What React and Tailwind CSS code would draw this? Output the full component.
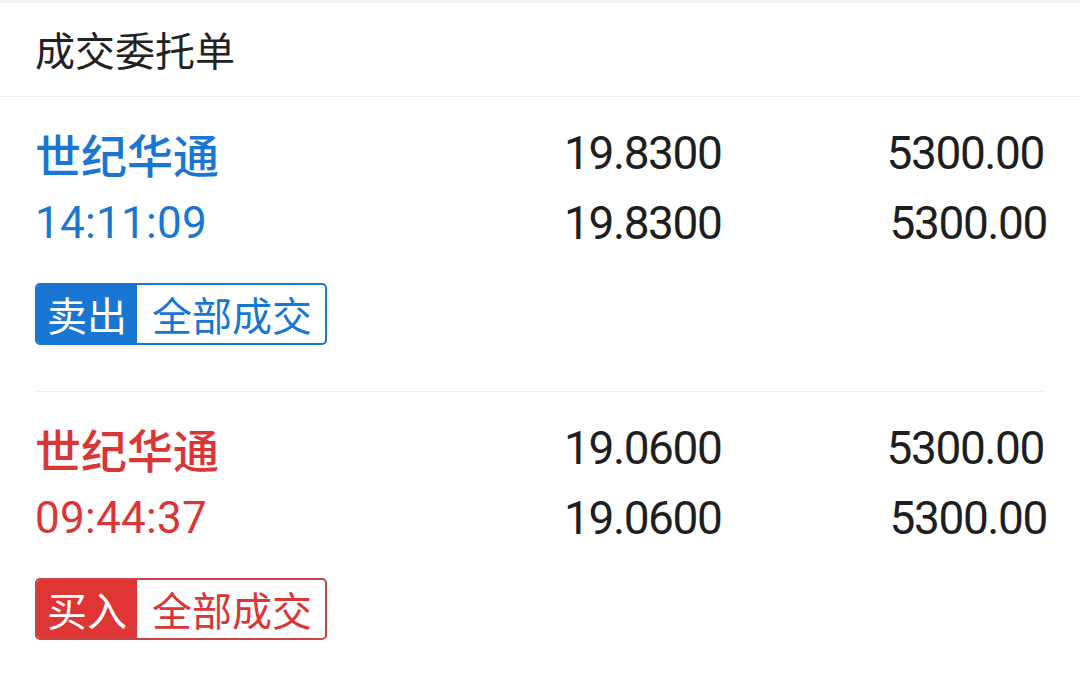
import React from "react";

const cjk = { fontFamily: '"Noto Sans CJK SC", "Noto Sans", sans-serif' };
const num = { fontFamily: 'Roboto, "Noto Sans CJK SC", sans-serif' };

function Item({ color, bg, border, name, time, side, price, qty, pt }) {
  return (
    <div className={`flex flex-col ${pt}`}>
      <div className="flex h-[70px] items-center">
        <div className={`w-[529px] text-[46px] font-medium leading-none ${color}`} style={cjk}>{name}</div>
        <div className="w-[160px] text-[46px] leading-none tracking-[-1.4px] text-[#1e1e1e]" style={num}>{price}</div>
        <div className="flex-1 pr-[1px] text-right text-[46px] leading-none tracking-[-1.4px] text-[#1e1e1e]" style={num}>{qty}</div>
      </div>
      <div className="flex h-[70px] items-center">
        <div className={`w-[529px] text-[44px] leading-none tracking-[0.3px] ${color}`} style={num}>{time}</div>
        <div className="w-[160px] text-[46px] leading-none tracking-[-1.4px] text-[#1e1e1e]" style={num}>{price}</div>
        <div className="-mr-[2px] flex-1 text-right text-[46px] leading-none tracking-[-1.4px] text-[#1e1e1e]" style={num}>{qty}</div>
      </div>
      <div className="mt-[25px] flex">
        <div className={`flex h-[62px] overflow-hidden rounded-[5px] border-2 ${border}`} style={cjk}>
          <div className={`flex w-[100px] items-center justify-center text-[40px] leading-none text-white ${bg}`}>{side}</div>
          <div className={`flex w-[188px] items-center justify-center pl-[2px] text-[40px] leading-none ${color}`}>全部成交</div>
        </div>
      </div>
    </div>
  );
}

export default function App() {
  return (
    <div className="h-[678px] w-[1080px] overflow-hidden bg-white">
      <div className="h-[3px] bg-[#f3f4f8]" />
      <div className="flex h-[93px] items-center pb-[2px] pl-[35px] text-[40px] leading-none text-[#222]" style={cjk}>
        成交委托单
      </div>
      <div className="h-px bg-[#eeeeee]" />
      <div className="px-[35px]">
        <Item
          pt="pt-[21px]"
          color="text-[#1976d2]"
          bg="bg-[#1976d2]"
          border="border-[#1976d2]"
          name="世纪华通"
          time="14:11:09"
          side="卖出"
          price="19.8300"
          qty="5300.00"
        />
        <div className="mt-[46px] h-px bg-[#eeeeee]" />
        <Item
          pt="pt-[21px]"
          color="text-[#d93636]"
          bg="bg-[#e03535]"
          border="border-[#c94444]"
          name="世纪华通"
          time="09:44:37"
          side="买入"
          price="19.0600"
          qty="5300.00"
        />
      </div>
    </div>
  );
}
